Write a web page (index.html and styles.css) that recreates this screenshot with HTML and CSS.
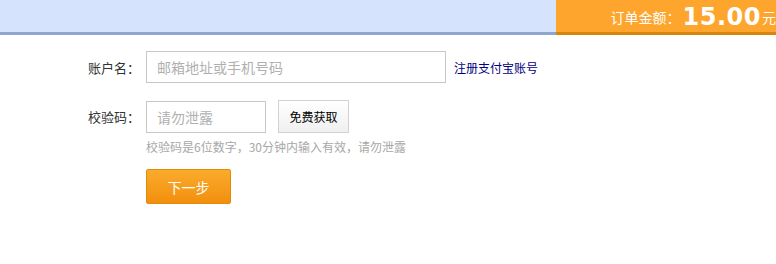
FILE: index.html
```html
<!DOCTYPE html>
<html>
<head>
<meta charset="utf-8">
<link rel="stylesheet" href="styles.css">
</head>
<body>
<div class="header">
  <div class="header-fill"></div>
  <div class="order">
    <span class="order-label">订单金额：</span><span class="order-amount">15.00</span><span class="order-unit">元</span>
  </div>
</div>
<div class="form">
  <div class="row">
    <label class="label">账户名：</label>
    <input class="input input-wide" type="text" placeholder="邮箱地址或手机号码">
    <a class="link" href="#">注册支付宝账号</a>
  </div>
  <div class="row row-code">
    <label class="label">校验码：</label>
    <input class="input input-short" type="text" placeholder="请勿泄露">
    <button class="btn-code" type="button">免费获取</button>
  </div>
  <div class="hint">校验码是6位数字，30分钟内输入有效，请勿泄露</div>
  <div class="submit-row">
    <button class="btn-next" type="button">下一步</button>
  </div>
</div>
</body>
</html>
```
FILE: styles.css
```css
* { box-sizing: border-box; }
body {
  margin: 0;
  background: #fff;
  font-family: "Noto Sans CJK SC", "Noto Sans", sans-serif;
  color: #333;
}
.header {
  display: flex;
  height: 35px;
}
.header-fill {
  flex: 1;
  background: #d5e4fc;
  border-bottom: 3px solid #8ea6d1;
}
.order {
  width: 220px;
  background: #fda52d;
  border-bottom: 3px solid #d8850e;
  display: flex;
  align-items: center;
  justify-content: flex-end;
  color: #fff;
  padding-top: 1px;
}
.order-label { font-size: 14px; margin-right: 2px; }
.order-amount {
  font-family: "DejaVu Sans", sans-serif;
  font-weight: bold;
  font-size: 24px;
  letter-spacing: 0.5px;
  line-height: 1;
}
.order-unit { font-size: 14px; margin-left: 1px; }
.form {
  padding-left: 88px;
  padding-top: 16px;
}
.row {
  display: flex;
  align-items: center;
}
.row-code { margin-top: 17px; }
.label {
  width: 58px;
  font-size: 13px;
  color: #333;
}
.input {
  height: 32px;
  border: 1px solid #c8c8c8;
  padding: 0 10px;
  font-size: 14px;
  font-family: inherit;
  outline: none;
}
.input::placeholder { color: #b0b0b0; }
.input-wide { width: 300px; }
.input-short { width: 120px; }
.link {
  margin-left: 8px;
  font-size: 12px;
  color: #000080;
  text-decoration: none;
}
.btn-code {
  margin-left: 12px;
  width: 71px;
  height: 33px;
  border: 1px solid #d2d2d2;
  background: linear-gradient(#ffffff, #f0f0f0);
  font-family: inherit;
  font-size: 12px;
  color: #000;
  padding: 0;
}
.hint {
  margin-left: 58px;
  margin-top: 5px;
  font-size: 12px;
  color: #a8a8a8;
  line-height: 18px;
}
.submit-row {
  margin-left: 58px;
  margin-top: 13px;
}
.btn-next {
  width: 85px;
  height: 35px;
  border: 1px solid #e28a0b;
  border-radius: 2px;
  background: linear-gradient(#fbab2c, #f28f0e);
  color: #fff;
  font-family: inherit;
  font-size: 14px;
  padding: 0;
}
```
